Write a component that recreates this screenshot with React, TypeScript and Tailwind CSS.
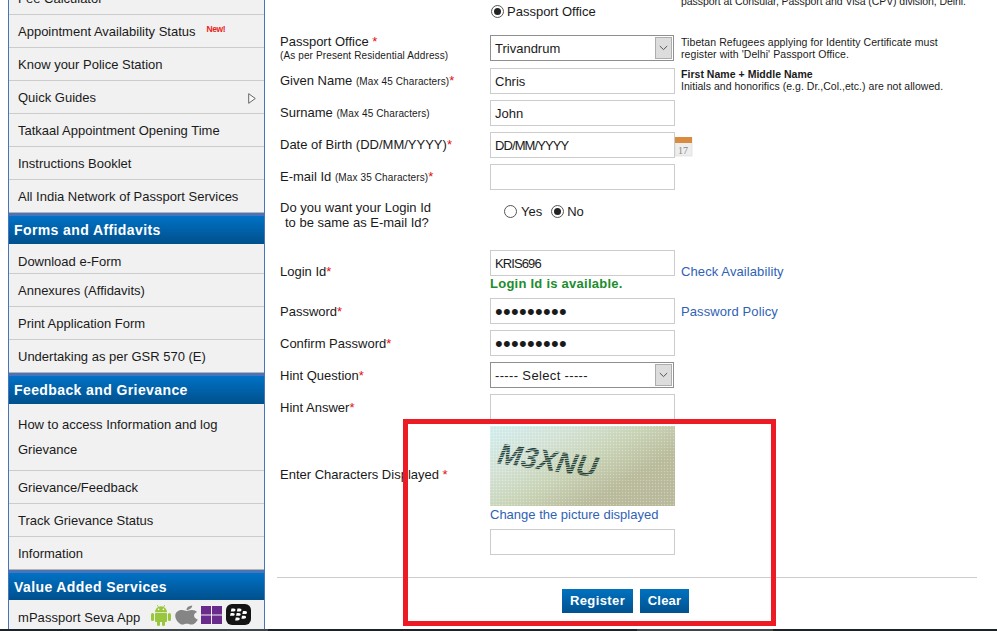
import React from "react";
import { FaApple, FaBlackberry } from "react-icons/fa";

const divider = "border-b border-[#cccccc]";

function Item({ h, children, className = "pt-[2px]" }: { h: string; children: React.ReactNode; className?: string }) {
  return <div className={`${h} ${divider} pl-[9px] flex items-center text-[13px] text-[#1a1a1a] ${className}`}>{children}</div>;
}

function Header({ children, h = "h-[28px]", className = "" }: { children: React.ReactNode; h?: string; className?: string }) {
  return (
    <div className={`${h} mt-[3px] pl-[5px] flex items-center bg-gradient-to-b from-[#0072c6] to-[#00508c] text-white font-bold text-[14px] tracking-[0.4px] ${className}`}>
      {children}
    </div>
  );
}

function Android() {
  return (
    <svg width="22" height="22" viewBox="0 0 22 22" className="ml-[10px] shrink-0">
      <g fill="#98c63c">
        <path d="M5 8.2 a6 6 0 0 1 12 0 z" />
        <path d="M7.2 1 L8.6 3.4 M14.8 1 L13.4 3.4" stroke="#98c63c" strokeWidth="0.8" />
        <rect x="5" y="9" width="12" height="9" rx="1" />
        <rect x="1" y="9" width="3.1" height="8" rx="1.5" />
        <rect x="17.9" y="9" width="3.1" height="8" rx="1.5" />
        <rect x="7" y="16" width="3" height="6" rx="1.5" />
        <rect x="12" y="16" width="3" height="6" rx="1.5" />
      </g>
      <circle cx="8.6" cy="5.4" r="0.8" fill="#ffffff" />
      <circle cx="13.4" cy="5.4" r="0.8" fill="#ffffff" />
    </svg>
  );
}

function Sidebar() {
  return (
    <aside className="ml-[8px] w-[257px] shrink-0 border-x border-[#4a74b8] bg-[#f1f1f1] flex flex-col [&>*]:shrink-0">
      <div className={`h-[15px] ${divider} pl-[9px] overflow-hidden text-[13px] text-[#1a1a1a]`}>
        <div className="-mt-[10px] leading-[17px]">Fee Calculator</div>
      </div>
      <Item h="h-[33px]">
        Appointment Availability Status
        <span className="ml-[11px] -mt-[6px] text-[8.5px] font-bold text-[#e8261c] tracking-[-0.4px]">New!</span>
      </Item>
      <Item h="h-[33px]">Know your Police Station</Item>
      <Item h="h-[33px]" className="pt-[2px] justify-between">
        Quick Guides
        <svg width="8" height="11" viewBox="0 0 8 11" className="mr-[8px]">
          <path d="M.7 .7 L7.3 5.5 L.7 10.3 Z" fill="#f8f8f8" stroke="#666" strokeWidth="1" />
        </svg>
      </Item>
      <Item h="h-[33px]">Tatkaal Appointment Opening Time</Item>
      <Item h="h-[33px]">Instructions Booklet</Item>
      <Item h="h-[33px]" className="pt-[2px] !border-[#b4b4b4]">All India Network of Passport Services</Item>
      <div className="bg-[#4a74b8]"><Header>Forms and Affidavits</Header></div>
      <Item h="h-[30px]" className="pt-[7px]">Download e-Form</Item>
      <Item h="h-[33px]">Annexures (Affidavits)</Item>
      <Item h="h-[33px]">Print Application Form</Item>
      <Item h="h-[33px]" className="pt-[2px] !border-[#b4b4b4]">Undertaking as per GSR 570 (E)</Item>
      <div className="bg-[#4a74b8]"><Header>Feedback and Grievance</Header></div>
      <div className={`h-[67px] ${divider} pl-[9px] pt-[8px] text-[13px] leading-[25px] text-[#1a1a1a]`}>
        How to access Information and log
        <br />
        Grievance
      </div>
      <Item h="h-[33px]">Grievance/Feedback</Item>
      <Item h="h-[33px]">Track Grievance Status</Item>
      <Item h="h-[33px]" className="pt-[2px] !border-[#b4b4b4]">Information</Item>
      <div className="bg-[#4a74b8]"><Header h="h-[27px]" className="pt-[2px]">Value Added Services</Header></div>
      <div className="h-[29px] pl-[9px] flex items-center text-[13px] text-[#1a1a1a] tracking-[0.05px]">
        <span className="mt-[6px]">mPassport Seva App</span>
        <Android />
        <FaApple className="ml-[3px] w-[23px] h-[22px] text-[#858585] shrink-0" preserveAspectRatio="none" />
        <svg width="21" height="18" viewBox="0 0 21 18" className="ml-[3px] shrink-0">
          <rect x="0" y="0" width="10" height="8.5" fill="#6a2c8c" />
          <rect x="11" y="0" width="10" height="8.5" fill="#6a2c8c" />
          <rect x="0" y="9.5" width="10" height="8.5" fill="#6a2c8c" />
          <rect x="11" y="9.5" width="10" height="8.5" fill="#6a2c8c" />
        </svg>
        <span className="ml-[4px] w-[25px] h-[21px] rounded-[6px] bg-[#141414] flex items-center justify-center shrink-0">
          <FaBlackberry className="text-white" size={17} />
        </span>
      </div>
    </aside>
  );
}

const Star = () => <span className="text-[#e01010]">*</span>;
const Small = ({ children }: { children: React.ReactNode }) => <span className="text-[10px] tracking-[0.12px]">{children}</span>;

function Field({ value = "", type = "text", className = "text-[13px]" }: { value?: string; type?: string; className?: string }) {
  return (
    <input
      readOnly
      type={type}
      value={value}
      className={`block w-[185px] h-[26px] border border-[#cccccc] bg-white px-[4px] text-[#1a1a1a] outline-none font-['Liberation_Sans',Arial,sans-serif] ${className}`}
    />
  );
}

function SelectBox({ value, className = "" }: { value: string; className?: string }) {
  return (
    <div className="w-[184px] h-[26px] border border-[#8f8f8f] bg-white flex items-center justify-between pl-[4px] p-px text-[13px] text-[#1a1a1a]">
      <span className={`mt-[2px] ${className}`}>{value}</span>
      <span className="w-[17px] h-full bg-[#dddddd] border border-[#adadad] flex items-center justify-center">
        <svg width="9" height="6" viewBox="0 0 9 6"><path d="M.8 1 L4.5 4.6 L8.2 1" fill="none" stroke="#555" strokeWidth="1" /></svg>
      </span>
    </div>
  );
}

function Row({ h, label, children, note, labelClass = "" }: { h: string; label?: React.ReactNode; children?: React.ReactNode; note?: React.ReactNode; labelClass?: string }) {
  return (
    <div className={`${h} shrink-0 flex pl-[3px]`}>
      <div className={`w-[210px] shrink-0 text-[13px] leading-[17px] text-[#1a1a1a] ${labelClass}`}>{label}</div>
      <div className="w-[185px] shrink-0">{children}</div>
      {note}
    </div>
  );
}

function Note({ children, className = "" }: { children: React.ReactNode; className?: string }) {
  return <div className={`ml-[6px] text-[10.5px] leading-[12px] text-[#1a1a1a] ${className}`}>{children}</div>;
}

const Link = ({ children, className = "" }: { children: React.ReactNode; className?: string }) => (
  <span className={`text-[13px] text-[#2f62b5] ${className}`}>{children}</span>
);

function Radio({ on }: { on?: boolean }) {
  return (
    <span className="w-[13px] h-[13px] rounded-full border border-[#555] bg-white flex items-center justify-center shrink-0">
      {on && <span className="w-[7px] h-[7px] rounded-full bg-[#222]" />}
    </span>
  );
}

function Captcha() {
  return (
    <svg width="185" height="80" viewBox="0 0 185 80" className="block">
      <defs>
        <linearGradient id="cbg" x1="0" y1="0" x2="1" y2="0.75">
          <stop offset="0" stopColor="#d5f0f2" />
          <stop offset="0.3" stopColor="#d6e4d8" />
          <stop offset="0.55" stopColor="#cbd5b8" />
          <stop offset="0.8" stopColor="#bcbd9f" />
          <stop offset="1" stopColor="#bbbb9e" />
        </linearGradient>
        <pattern id="dots" width="3" height="3" patternUnits="userSpaceOnUse">
          <rect width="1" height="1" fill="#ffffff" opacity="0.3" />
          <rect x="1.5" y="1.5" width="1" height="1" fill="#7d8a70" opacity="0.18" />
        </pattern>
        <pattern id="lines" width="2.4" height="2.4" patternUnits="userSpaceOnUse" patternTransform="rotate(-14)">
          <rect width="2.4" height="1.5" fill="#1d3a35" />
        </pattern>
      </defs>
      <rect width="185" height="80" fill="url(#cbg)" />
      <rect width="185" height="80" fill="url(#dots)" />
      <text
        x="0"
        y="0"
        transform="translate(5 37) rotate(8) skewX(-14)"
        fontFamily="Liberation Sans, Arial, sans-serif"
        fontSize="29"
        fontWeight="700"
        fill="url(#lines)"
        textLength="100"
        lengthAdjust="spacingAndGlyphs"
      >
        M3XNU
      </text>
    </svg>
  );
}

function Form() {
  return (
    <main className="ml-[12px] w-[700px] shrink-0 flex flex-col">
      <Row
        h="h-[35px]"
        note={
          <Note className="-mt-[5px] whitespace-nowrap tracking-[-0.07px]">
            passport at Consular, Passport and Visa (CPV) division, Delhi.
          </Note>
        }
      >
        <div className="flex items-center h-[22px] text-[13px] text-[#1a1a1a] gap-[3px] pl-px">
          <Radio on />
          <span className="mt-[2px]">Passport Office</span>
        </div>
      </Row>
      <Row
        h="h-[33px]"
        label={
          <div className="-mt-[2px]">
            Passport Office <Star />
            <div className="text-[10px] tracking-[0.12px] leading-[12px]">(As per Present Residential Address)</div>
          </div>
        }
        note={
          <Note className="pt-[1px] whitespace-nowrap tracking-[0.08px]">
            Tibetan Refugees applying for Identity Certificate must
            <br />
            register with 'Delhi' Passport Office.
          </Note>
        }
      >
        <SelectBox value="Trivandrum" />
      </Row>
      <Row
        h="h-[32px]"
        labelClass="pt-[4px]"
        label={<>Given Name <Small>(Max 45 Characters)</Small><Star /></>}
        note={
          <Note className="whitespace-nowrap tracking-[0.03px]">
            <b>First Name + Middle Name</b>
            <br />
            Initials and honorifics (e.g. Dr.,Col.,etc.) are not allowed.
          </Note>
        }
      >
        <Field value="Chris" />
      </Row>
      <Row h="h-[32px]" labelClass="pt-[4px]" label={<>Surname <Small>(Max 45 Characters)</Small></>}>
        <Field value="John" />
      </Row>
      <Row
        h="h-[32px]"
        labelClass="pt-[4px]"
        label={<>Date of Birth (DD/MM/YYYY)<Star /></>}
        note={
          <svg width="18" height="20" viewBox="0 0 18 20" className="mt-[5px] shrink-0">
            <rect x="0" y="0" width="17" height="19" fill="#eeeeee" stroke="#d0d0d0" strokeWidth="0.5" />
            <rect x="0" y="0" width="17" height="6" fill="#d98c3f" />
            <text x="3" y="16.5" fontSize="10" fontFamily="Liberation Serif, serif" fill="#888888">17</text>
          </svg>
        }
      >
        <Field value="DD/MM/YYYY" className="text-[13px] tracking-[-0.9px]" />
      </Row>
      <Row h="h-[32px]" labelClass="pt-[4px]" label={<>E-mail Id <Small>(Max 35 Characters)</Small><Star /></>}>
        <Field />
      </Row>
      <Row
        h="h-[54px]"
        labelClass="pt-[4px] !leading-[15px]"
        label={
          <>
            Do you want your Login Id
            <br />
            <span className="pl-[5px]">to be same as E-mail Id?</span>
          </>
        }
      >
        <div className="flex items-center h-[30px] pl-[14px] text-[13px] text-[#1a1a1a]">
          <Radio />
          <span className="ml-[4px] mt-[2px]">Yes</span>
          <span className="ml-[9px]"><Radio on /></span>
          <span className="ml-[3px] mt-[2px]">No</span>
        </div>
      </Row>
      <Row
        h="h-[48px]"
        labelClass="pt-[13px]"
        label={<>Login Id<Star /></>}
        note={<Link className="ml-[6px] mt-[13px] leading-[17px] whitespace-nowrap tracking-[0.1px]">Check Availability</Link>}
      >
        <Field value="KRIS696" className="text-[13px] tracking-[-0.9px]" />
        <div className="mt-[-1px] text-[13px] tracking-[0.25px] leading-[18px] font-bold text-[#218c2e] whitespace-nowrap">Login Id is available.</div>
      </Row>
      <Row
        h="h-[32px]"
        labelClass="pt-[5px]"
        label={<>Password<Star /></>}
        note={<Link className="ml-[6px] mt-[5px] leading-[17px] whitespace-nowrap tracking-[0.1px]">Password Policy</Link>}
      >
        <Field type="password" value="123456789" className="text-[22px] tracking-[0.3px]" />
      </Row>
      <Row h="h-[32px]" labelClass="pt-[5px]" label={<>Confirm Password<Star /></>}>
        <Field type="password" value="123456789" className="text-[22px] tracking-[0.3px]" />
      </Row>
      <Row h="h-[32px]" labelClass="pt-[5px]" label={<>Hint Question<Star /></>}>
        <SelectBox value="----- Select -----" className="tracking-[0.35px]" />
      </Row>
      <Row h="h-[32px]" labelClass="pt-[5px]" label={<>Hint Answer<Star /></>}>
        <Field />
      </Row>
      <Row h="h-[151px]" labelClass="pt-[40px]" label={<>Enter Characters Displayed <Star /></>}>
        <Captcha />
        <Link className="block leading-[17px] whitespace-nowrap">Change the picture displayed</Link>
        <div className="mt-[6px]"><Field /></div>
      </Row>
      <div className="border-t border-[#cccccc] h-[52px] flex justify-center items-start pt-[11px] gap-[7px] shrink-0">
        <div className="h-[24px] w-[71px] ml-[-3px] flex items-center justify-center bg-gradient-to-b from-[#0072c0] to-[#00528f] text-white text-[13px] font-bold tracking-[0.4px]">Register</div>
        <div className="h-[24px] w-[49px] flex items-center justify-center bg-gradient-to-b from-[#0072c0] to-[#00528f] text-white text-[13px] font-bold tracking-[0.2px]">Clear</div>
      </div>
    </main>
  );
}

export default function App() {
  return (
    <div className="relative w-[997px] h-[631px] overflow-hidden bg-white flex flex-col font-['Liberation_Sans',Arial,sans-serif]">
      <div className="flex flex-1 min-h-0 overflow-hidden">
        <Sidebar />
        <Form />
      </div>
      <div className="h-[2px] flex shrink-0 bg-[#1d2226]">
        <div className="w-[130px]" />
        <div className="w-[138px] bg-[#40454a]" />
        <div className="w-[369px]" />
        <div className="w-[136px] bg-[#40454a]" />
      </div>
      <div className="absolute left-[403px] top-[419px] w-[373px] h-[207px] border-[5px] border-[#ed1c24]" />
    </div>
  );
}
